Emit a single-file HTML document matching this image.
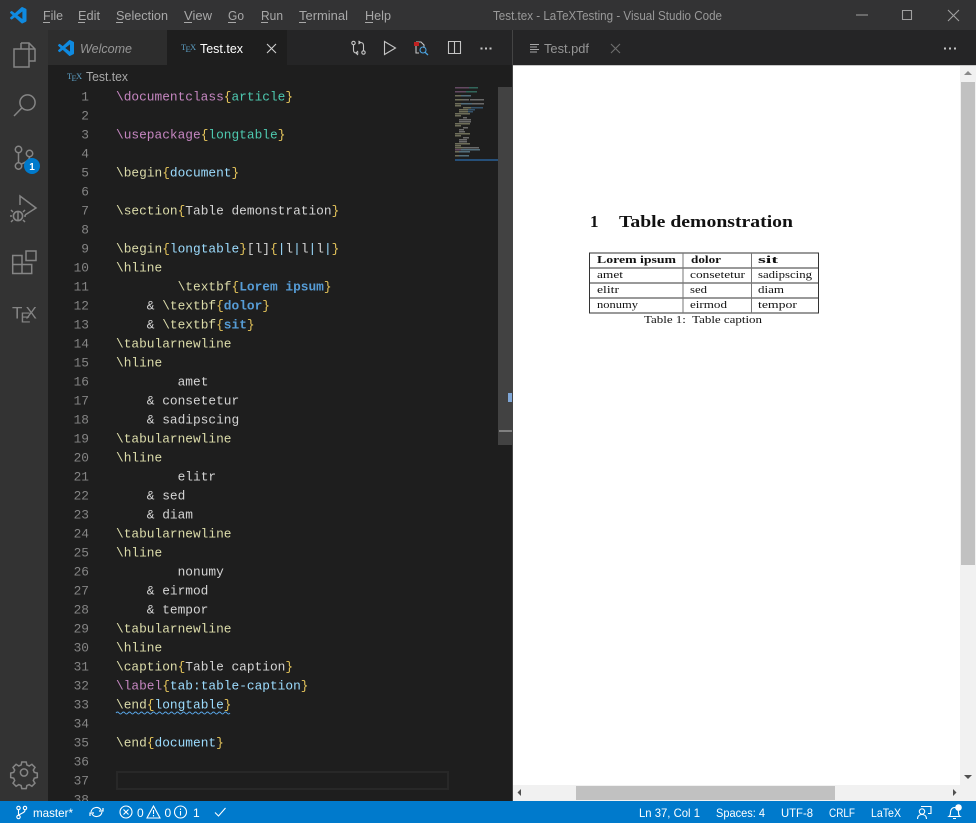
<!DOCTYPE html>
<html><head><meta charset="utf-8"><title>Test.tex - LaTeXTesting - Visual Studio Code</title>
<style>
html,body{margin:0;padding:0;background:#1e1e1e;overflow:hidden}
svg{display:block;position:absolute;left:0;top:0}
text{white-space:pre}
.u{font-family:"Liberation Sans",sans-serif;font-size:12.5px}
.m{fill:#a8a8a8}
.code text{font-family:"Liberation Mono",monospace;font-size:12.83px}
.n text{font-family:"Liberation Mono",monospace;font-size:12.83px;fill:#858585;text-anchor:end}
.p{fill:#c586c0}.y{fill:#dcdcaa}.b{fill:#e6c65c}.t{fill:#4ec9b0}.c{fill:#9cdcfe}.w{fill:#d4d4d4}.k{fill:#569cd6;font-weight:bold}
.st{fill:#fff;font-family:"Liberation Sans",sans-serif;font-size:12px}
.tx{font-family:"Liberation Serif",serif;fill:#111}
.ic{fill:none;stroke:#858585;stroke-width:1.5}
.ui{fill:none;stroke:#c5c5c5;stroke-width:1.1}
.si{fill:none;stroke:#fff;stroke-width:1.1}
</style></head>
<body>
<svg width="976" height="823" viewBox="0 0 976 823" xmlns="http://www.w3.org/2000/svg">
<!-- backgrounds -->
<rect width="976" height="823" fill="#1e1e1e"/>
<rect width="976" height="30" fill="#333334"/>
<rect y="30" width="48" height="771" fill="#333333"/>
<rect x="48" y="30" width="465" height="35" fill="#252526"/>
<rect x="48" y="30" width="119" height="35" fill="#2d2d2d"/>
<rect x="167" y="30" width="120" height="35" fill="#1e1e1e"/>
<rect x="513" y="30" width="463" height="35" fill="#252526"/>
<rect x="512" y="30" width="1" height="771" fill="#444444"/>
<rect x="513" y="65" width="463" height="1" fill="#c8c8c8"/>
<rect x="513" y="66" width="463" height="735" fill="#ffffff"/>

<!-- title bar -->
<g transform="translate(10,7) scale(.165)"><path fill="#0f8ae0" fill-rule="evenodd" d="M96.5 10.8 75.9.9a6.2 6.2 0 0 0-7.1 1.2L29.4 38 12.2 25a4.2 4.2 0 0 0-5.3.2L1.4 30.2a4.2 4.2 0 0 0 0 6.2L16.3 50 1.4 63.6a4.2 4.2 0 0 0 0 6.2l5.5 5a4.2 4.2 0 0 0 5.3.2l17.2-13 39.4 35.9a6.2 6.2 0 0 0 7.1 1.2l20.6-9.9a6.2 6.2 0 0 0 3.5-5.6V16.4a6.2 6.2 0 0 0-3.5-5.6zM75 72.7 45.1 50 75 27.3z"/></g>
<g class="u m">
<text x="43" y="20" textLength="20" lengthAdjust="spacingAndGlyphs">File</text>
<text x="78" y="20" textLength="22" lengthAdjust="spacingAndGlyphs">Edit</text>
<text x="116" y="20" textLength="52" lengthAdjust="spacingAndGlyphs">Selection</text>
<text x="184" y="20" textLength="28" lengthAdjust="spacingAndGlyphs">View</text>
<text x="228" y="20" textLength="16" lengthAdjust="spacingAndGlyphs">Go</text>
<text x="261" y="20" textLength="22" lengthAdjust="spacingAndGlyphs">Run</text>
<text x="299" y="20" textLength="49" lengthAdjust="spacingAndGlyphs">Terminal</text>
<text x="365" y="20" textLength="26" lengthAdjust="spacingAndGlyphs">Help</text>
</g>
<g fill="#a8a8a8">
<rect x="43" y="22" width="7" height="1"/><rect x="78" y="22" width="7" height="1"/><rect x="116" y="22" width="7" height="1"/><rect x="184" y="22" width="8" height="1"/><rect x="228" y="22" width="8" height="1"/><rect x="261" y="22" width="7" height="1"/><rect x="299" y="22" width="7" height="1"/><rect x="365" y="22" width="8" height="1"/>
</g>
<text class="u" x="493" y="20" textLength="229" lengthAdjust="spacingAndGlyphs" fill="#999">Test.tex - LaTeXTesting - Visual Studio Code</text>
<path d="M856 15h12M902.5 10.5h9v9h-9zM948 10l11 11M959 10l-11 11" fill="none" stroke="#a0a0a0" stroke-width="1.1"/>

<!-- activity bar -->
<path class="ic" d="M21 43h8l6 6v12h-6M21 43v6M29 43v6h6M14 49h15v18H14z"/>
<circle class="ic" cx="27.5" cy="102.5" r="7.6" stroke-width="1.7"/><path class="ic" stroke-width="2" d="M21.8 108 14 116"/>
<g class="ic" stroke-width="1.6"><circle cx="18.5" cy="149.5" r="3.2"/><circle cx="29.5" cy="153.5" r="3.2"/><circle cx="18.5" cy="166" r="3.2"/><path d="M18.5 153v10M29.5 157c0 4-6 6-8 7"/></g>
<circle cx="32" cy="166" r="8" fill="#007acc"/><text x="32" y="170" text-anchor="middle" fill="#fff" font-family="Liberation Sans,sans-serif" font-size="10" font-weight="bold">1</text>
<path class="ic" d="M20 205v-9l16 12-11 7"/>
<g class="ic"><circle cx="18" cy="216" r="4.6" stroke-width="1.6"/><path d="M13 212l-2-2M23 212l2-2M12 216h-2M24 216h2M13 220l-2 2M23 220l2 2M18 211v10"/></g>
<path class="ic" d="M12.7 255.5h9.3v18h-9.3zM12.7 264.5h19v9h-10M26 251h10v9.5H26z"/>
<g font-family="Liberation Sans,sans-serif" font-size="17" fill="#858585"><text x="12" y="318.5">T</text><text x="20.5" y="322.5" font-size="15">E</text><text x="25.5" y="318.5">X</text></g>
<g transform="translate(24,772.5)"><circle r="3.6" class="ic" stroke-width="1.5"/><path class="ic" stroke-width="1.8" d="M-2.2-10.5h4.4l.7 3 2.3 1 2.7-1.7 3.1 3.1-1.7 2.7 1 2.3 3 .7v4.4l-3 .7-1 2.3 1.7 2.7-3.1 3.1-2.7-1.7-2.3 1-.7 3h-4.4l-.7-3-2.3-1-2.7 1.7-3.1-3.1 1.7-2.7-1-2.3-3-.7v-4.4l3-.7 1-2.3-1.7-2.7 3.1-3.1 2.7 1.7 2.3-1z"/></g>

<!-- tabs -->
<g transform="translate(58,40) scale(.16)"><path fill="#0f8ae0" fill-rule="evenodd" d="M96.5 10.8 75.9.9a6.2 6.2 0 0 0-7.1 1.2L29.4 38 12.2 25a4.2 4.2 0 0 0-5.3.2L1.4 30.2a4.2 4.2 0 0 0 0 6.2L16.3 50 1.4 63.6a4.2 4.2 0 0 0 0 6.2l5.5 5a4.2 4.2 0 0 0 5.3.2l17.2-13 39.4 35.9a6.2 6.2 0 0 0 7.1 1.2l20.6-9.9a6.2 6.2 0 0 0 3.5-5.6V16.4a6.2 6.2 0 0 0-3.5-5.6zM75 72.7 45.1 50 75 27.3z"/></g>
<text class="u" x="80" y="53" textLength="52" lengthAdjust="spacingAndGlyphs" font-style="italic" fill="#969696">Welcome</text>
<g font-family="Liberation Serif,serif" font-size="8.5" fill="#5c9fc4"><text x="181" y="50">T</text><text x="185.5" y="52">E</text><text x="190" y="50">X</text></g>
<text class="u" x="200" y="53" textLength="43" lengthAdjust="spacingAndGlyphs" fill="#fff">Test.tex</text>
<path d="M267 44l9 9M276 44l-9 9" fill="none" stroke="#d0d0d0" stroke-width="1.1"/>

<!-- editor actions -->
<g class="ui"><circle cx="353.5" cy="43" r="1.7"/><circle cx="363.5" cy="52.5" r="1.7"/><path d="M353.5 45v5c0 2 1 3 3 3h2M358 51l-2 2 2 2M363.5 50.5v-5c0-2-1-3-3-3h-2M358.5 41l2 1.5-2 1.5"/></g>
<path class="ui" d="M384.5 41.5v13l11-6.5z" stroke-width="1.2"/>
<path class="ui" d="M416 42h5l3 3v3M416 42v11h3" stroke-width="1"/><rect x="414" y="42" width="5" height="4" fill="#c02020"/><circle cx="423" cy="50" r="3" fill="none" stroke="#4aa3e0" stroke-width="1.1"/><path d="M425 52.2l3 2.8" stroke="#4aa3e0" stroke-width="1.3"/>
<path class="ui" d="M448.5 41.5h12v12h-12zM454.5 41.5v12"/>
<g fill="#c5c5c5"><rect x="480.5" y="47.5" width="2" height="2"/><rect x="485" y="47.5" width="2" height="2"/><rect x="489.5" y="47.5" width="2" height="2"/>
<rect x="944" y="47.5" width="2" height="2"/><rect x="949" y="47.5" width="2" height="2"/><rect x="954" y="47.5" width="2" height="2"/></g>

<!-- pdf tab -->
<path d="M530 44.5h9M530 47h7M530 49.5h9M530 52h7" stroke="#a8a8a8" stroke-width="1.1" fill="none"/>
<text class="u" x="544" y="53" textLength="45" lengthAdjust="spacingAndGlyphs" fill="#969696">Test.pdf</text>
<path d="M611 44l9 9M620 44l-9 9" fill="none" stroke="#6e6e6e" stroke-width="1.1"/>

<!-- breadcrumb -->
<g font-family="Liberation Serif,serif" font-size="8.5" fill="#5c9fc4"><text x="67" y="79">T</text><text x="71.5" y="81">E</text><text x="76" y="79">X</text></g>
<text class="u" x="86" y="81" textLength="42" lengthAdjust="spacingAndGlyphs" fill="#a8a8a8">Test.tex</text>

<!-- current line -->
<rect x="117" y="772" width="331" height="17" fill="none" stroke="#282828" stroke-width="2"/>

<!-- line numbers -->
<g class="n" transform="translate(0,-.6)">
<text x="89" y="101">1</text><text x="89" y="120">2</text><text x="89" y="139">3</text><text x="89" y="158">4</text><text x="89" y="177">5</text><text x="89" y="196">6</text><text x="89" y="215">7</text><text x="89" y="234">8</text><text x="89" y="253">9</text><text x="89" y="272">10</text><text x="89" y="291">11</text><text x="89" y="310">12</text><text x="89" y="329">13</text><text x="89" y="348">14</text><text x="89" y="367">15</text><text x="89" y="386">16</text><text x="89" y="405">17</text><text x="89" y="424">18</text><text x="89" y="443">19</text><text x="89" y="462">20</text><text x="89" y="481">21</text><text x="89" y="500">22</text><text x="89" y="519">23</text><text x="89" y="538">24</text><text x="89" y="557">25</text><text x="89" y="576">26</text><text x="89" y="595">27</text><text x="89" y="614">28</text><text x="89" y="633">29</text><text x="89" y="652">30</text><text x="89" y="671">31</text><text x="89" y="690">32</text><text x="89" y="709">33</text><text x="89" y="728">34</text><text x="89" y="747">35</text><text x="89" y="766">36</text><text x="89" y="785">37</text><text x="89" y="804">38</text>
</g>

<!-- code -->
<g class="code" transform="translate(0,-.6)">
<text x="116" y="101"><tspan class="p">\documentclass</tspan><tspan class="b">{</tspan><tspan class="t">article</tspan><tspan class="b">}</tspan></text>
<text x="116" y="139"><tspan class="p">\usepackage</tspan><tspan class="b">{</tspan><tspan class="t">longtable</tspan><tspan class="b">}</tspan></text>
<text x="116" y="177"><tspan class="y">\begin</tspan><tspan class="b">{</tspan><tspan class="c">document</tspan><tspan class="b">}</tspan></text>
<text x="116" y="215"><tspan class="y">\section</tspan><tspan class="b">{</tspan><tspan class="w">Table demonstration</tspan><tspan class="b">}</tspan></text>
<text x="116" y="253"><tspan class="y">\begin</tspan><tspan class="b">{</tspan><tspan class="c">longtable</tspan><tspan class="b">}</tspan><tspan class="w">[l]</tspan><tspan class="b">{</tspan><tspan class="c">|</tspan><tspan class="w">l</tspan><tspan class="c">|</tspan><tspan class="w">l</tspan><tspan class="c">|</tspan><tspan class="w">l</tspan><tspan class="c">|</tspan><tspan class="b">}</tspan></text>
<text x="116" y="272" class="y">\hline</text>
<text x="177.6" y="291"><tspan class="y">\textbf</tspan><tspan class="b">{</tspan><tspan class="k">Lorem ipsum</tspan><tspan class="b">}</tspan></text>
<text x="146.8" y="310"><tspan class="w">&amp; </tspan><tspan class="y">\textbf</tspan><tspan class="b">{</tspan><tspan class="k">dolor</tspan><tspan class="b">}</tspan></text>
<text x="146.8" y="329"><tspan class="w">&amp; </tspan><tspan class="y">\textbf</tspan><tspan class="b">{</tspan><tspan class="k">sit</tspan><tspan class="b">}</tspan></text>
<text x="116" y="348" class="y">\tabularnewline</text>
<text x="116" y="367" class="y">\hline</text>
<text x="177.6" y="386" class="w">amet</text>
<text x="146.8" y="405" class="w">&amp; consetetur</text>
<text x="146.8" y="424" class="w">&amp; sadipscing</text>
<text x="116" y="443" class="y">\tabularnewline</text>
<text x="116" y="462" class="y">\hline</text>
<text x="177.6" y="481" class="w">elitr</text>
<text x="146.8" y="500" class="w">&amp; sed</text>
<text x="146.8" y="519" class="w">&amp; diam</text>
<text x="116" y="538" class="y">\tabularnewline</text>
<text x="116" y="557" class="y">\hline</text>
<text x="177.6" y="576" class="w">nonumy</text>
<text x="146.8" y="595" class="w">&amp; eirmod</text>
<text x="146.8" y="614" class="w">&amp; tempor</text>
<text x="116" y="633" class="y">\tabularnewline</text>
<text x="116" y="652" class="y">\hline</text>
<text x="116" y="671"><tspan class="y">\caption</tspan><tspan class="b">{</tspan><tspan class="w">Table caption</tspan><tspan class="b">}</tspan></text>
<text x="116" y="690"><tspan class="p">\label</tspan><tspan class="b">{</tspan><tspan class="c">tab:table-caption</tspan><tspan class="b">}</tspan></text>
<text x="116" y="709"><tspan class="y">\end</tspan><tspan class="b">{</tspan><tspan class="c">longtable</tspan><tspan class="b">}</tspan></text>
<text x="116" y="747"><tspan class="y">\end</tspan><tspan class="b">{</tspan><tspan class="c">document</tspan><tspan class="b">}</tspan></text>
</g>
<path d="M116 713q1.5-2 3 0t3 0 3 0 3 0 3 0 3 0 3 0 3 0 3 0 3 0 3 0 3 0 3 0 3 0 3 0 3 0 3 0 3 0 3 0 3 0 3 0 3 0 3 0 3 0 3 0 3 0 3 0 3 0 3 0 3 0 3 0 3 0 3 0 3 0 3 0 3 0 3 0 3 0" fill="none" stroke="#5aa7e8" stroke-width="1"/>

<!-- minimap -->
<g opacity=".42" shape-rendering="crispEdges">
<rect x="455" y="87" width="14" height="1.5" fill="#c586c0"/><rect x="469" y="87" width="9" height="1.5" fill="#4ec9b0"/>
<rect x="455" y="91" width="11" height="1.5" fill="#c586c0"/><rect x="466" y="91" width="11" height="1.5" fill="#4ec9b0"/>
<rect x="455" y="95" width="6" height="1.5" fill="#dcdcaa"/><rect x="461" y="95" width="10" height="1.5" fill="#9cdcfe"/>
<rect x="455" y="99" width="8" height="1.5" fill="#dcdcaa"/><rect x="463" y="99" width="6" height="1.5" fill="#d4d4d4"/><rect x="470" y="99" width="14" height="1.5" fill="#d4d4d4"/>
<rect x="455" y="103" width="6" height="1.5" fill="#dcdcaa"/><rect x="461" y="103" width="11" height="1.5" fill="#9cdcfe"/><rect x="472" y="103" width="12" height="1.5" fill="#d4d4d4"/>
<rect x="455" y="105" width="6" height="1.5" fill="#dcdcaa"/>
<rect x="463" y="107" width="8" height="1.5" fill="#dcdcaa"/><rect x="471" y="107" width="12" height="1.5" fill="#569cd6"/>
<rect x="459" y="109" width="9" height="1.5" fill="#dcdcaa"/><rect x="468" y="109" width="7" height="1.5" fill="#569cd6"/>
<rect x="459" y="111" width="9" height="1.5" fill="#dcdcaa"/><rect x="468" y="111" width="5" height="1.5" fill="#569cd6"/>
<rect x="455" y="113" width="15" height="1.5" fill="#dcdcaa"/><rect x="455" y="115" width="6" height="1.5" fill="#dcdcaa"/>
<rect x="463" y="117" width="4" height="1.5" fill="#d4d4d4"/><rect x="459" y="119" width="12" height="1.5" fill="#d4d4d4"/><rect x="459" y="121" width="12" height="1.5" fill="#d4d4d4"/>
<rect x="455" y="123" width="15" height="1.5" fill="#dcdcaa"/><rect x="455" y="125" width="6" height="1.5" fill="#dcdcaa"/>
<rect x="463" y="127" width="5" height="1.5" fill="#d4d4d4"/><rect x="459" y="129" width="5" height="1.5" fill="#d4d4d4"/><rect x="459" y="131" width="6" height="1.5" fill="#d4d4d4"/>
<rect x="455" y="133" width="15" height="1.5" fill="#dcdcaa"/><rect x="455" y="135" width="6" height="1.5" fill="#dcdcaa"/>
<rect x="463" y="137" width="6" height="1.5" fill="#d4d4d4"/><rect x="459" y="139" width="8" height="1.5" fill="#d4d4d4"/><rect x="459" y="141" width="8" height="1.5" fill="#d4d4d4"/>
<rect x="455" y="143" width="15" height="1.5" fill="#dcdcaa"/><rect x="455" y="145" width="6" height="1.5" fill="#dcdcaa"/>
<rect x="455" y="147" width="8" height="1.5" fill="#dcdcaa"/><rect x="463" y="147" width="16" height="1.5" fill="#d4d4d4"/>
<rect x="455" y="149" width="6" height="1.5" fill="#c586c0"/><rect x="461" y="149" width="19" height="1.5" fill="#9cdcfe"/>
<rect x="455" y="151" width="4" height="1.5" fill="#dcdcaa"/><rect x="459" y="151" width="11" height="1.5" fill="#9cdcfe"/>
<rect x="455" y="155" width="4" height="1.5" fill="#dcdcaa"/><rect x="459" y="155" width="10" height="1.5" fill="#9cdcfe"/>
</g>
<rect x="455" y="159" width="43" height="2" fill="#264f78"/>

<!-- editor scrollbar -->
<rect x="498" y="87" width="14" height="358" fill="#424242"/>
<rect x="508" y="393" width="4" height="9" fill="#7fa6d6"/>
<rect x="499" y="430" width="13" height="2" fill="#808080"/>

<!-- PDF -->
<g class="tx">
<text x="590" y="227" font-size="17" font-weight="bold">1</text>
<text x="619" y="227" font-size="17" font-weight="bold" textLength="174" lengthAdjust="spacingAndGlyphs">Table demonstration</text>
<g font-size="11">
<text x="597" y="263" font-weight="bold" textLength="79" lengthAdjust="spacingAndGlyphs">Lorem ipsum</text>
<text x="691" y="263" font-weight="bold" textLength="30" lengthAdjust="spacingAndGlyphs">dolor</text>
<text x="758" y="263" font-weight="bold" textLength="20" lengthAdjust="spacingAndGlyphs">sit</text>
<text x="597" y="278" textLength="26" lengthAdjust="spacingAndGlyphs">amet</text>
<text x="690" y="278" textLength="55" lengthAdjust="spacingAndGlyphs">consetetur</text>
<text x="758" y="278" textLength="54" lengthAdjust="spacingAndGlyphs">sadipscing</text>
<text x="597" y="293" textLength="22" lengthAdjust="spacingAndGlyphs">elitr</text>
<text x="690" y="293" textLength="17" lengthAdjust="spacingAndGlyphs">sed</text>
<text x="758" y="293" textLength="26" lengthAdjust="spacingAndGlyphs">diam</text>
<text x="597" y="308" textLength="41" lengthAdjust="spacingAndGlyphs">nonumy</text>
<text x="690" y="308" textLength="37" lengthAdjust="spacingAndGlyphs">eirmod</text>
<text x="758" y="308" textLength="39" lengthAdjust="spacingAndGlyphs">tempor</text>
<text x="644" y="323" textLength="118" lengthAdjust="spacingAndGlyphs">Table 1:  Table caption</text>
</g>
</g>
<g stroke="#333" stroke-width="1" fill="none" shape-rendering="crispEdges">
<path d="M589 253h230M589 268h230M589 283h230M589 298h230M589 313h230M589.5 253v60M818.5 253v60"/>
<path d="M683 253v60M751.5 253v60" stroke="#777"/>
</g>

<!-- pdf scrollbars -->
<rect x="960" y="66" width="16" height="735" fill="#f1f1f1"/>
<rect x="961" y="82" width="14" height="483" fill="#c1c1c1"/>
<rect x="513" y="785" width="447" height="16" fill="#f1f1f1"/>
<rect x="576" y="786" width="259" height="14" fill="#c1c1c1"/>
<path d="M968 71l4 4h-8z" fill="#8a8a8a"/>
<path d="M964 775h8l-4 4z" fill="#505050"/>
<path d="M953 789v7l3.5-3.5z" fill="#505050"/>
<path d="M521 789v7l-3.5-3.500z" fill="#505050"/>

<!-- status bar -->
<rect y="801" width="976" height="22" fill="#007acc"/>
<g class="si"><circle cx="18.5" cy="808" r="1.7"/><circle cx="18.5" cy="817" r="1.7"/><circle cx="25" cy="808" r="1.7"/><path d="M18.5 810v5M25 810c0 3-4 3-6 5"/></g>
<text class="st" x="33" y="817" textLength="40" lengthAdjust="spacingAndGlyphs">master*</text>
<g class="si" stroke-width="1.6"><path d="M91 812a5.500 5.500 0 0 1 10-2M102 812a5.500 5.500 0 0 1-10 2"/><path d="M99 811h4v-3M94 813h-4v3" stroke-width="1.2"/></g>
<circle class="si" cx="126" cy="812" r="6"/><path class="si" d="M123.5 809.5l5 5M128.5 809.5l-5 5"/>
<text class="st" x="137" y="817">0</text>
<path class="si" d="M153.5 806l6.5 12h-13zM153.5 810v4M153.5 815v1.5"/>
<text class="st" x="164.5" y="817">0</text>
<circle class="si" cx="180.5" cy="812" r="6"/><path class="si" d="M180.5 811v4.5M180.5 808.5v1.5"/>
<text class="st" x="193" y="817">1</text>
<path class="si" stroke-width="1.3" d="M215 812.5l3.5 3.5 7-8"/>
<text class="st" x="639" y="817" textLength="61" lengthAdjust="spacingAndGlyphs">Ln 37, Col 1</text>
<text class="st" x="716" y="817" textLength="49" lengthAdjust="spacingAndGlyphs">Spaces: 4</text>
<text class="st" x="781" y="817" textLength="32" lengthAdjust="spacingAndGlyphs">UTF-8</text>
<text class="st" x="829" y="817" font-size="12.5" textLength="26" lengthAdjust="spacingAndGlyphs">CRLF</text>
<text class="st" x="871" y="817" textLength="30" lengthAdjust="spacingAndGlyphs">LaTeX</text>
<g class="si"><circle cx="922" cy="811.5" r="2.7"/><path d="M917.5 819c0-3 2-4.5 4.5-4.5s4.5 1.5 4.500 4.500M921 806.500h10v7h-3"/></g>
<path class="si" d="M949 816.5c1.5-1 1.5-2.500 1.5-4.500s1.500-4.500 4-4.500 4 2.500 4 4.500 0 3.500 1.500 4.500zM953 818.500h3"/>
<circle cx="958.5" cy="807.5" r="3.3" fill="#fff"/>
</svg>
</body></html>
